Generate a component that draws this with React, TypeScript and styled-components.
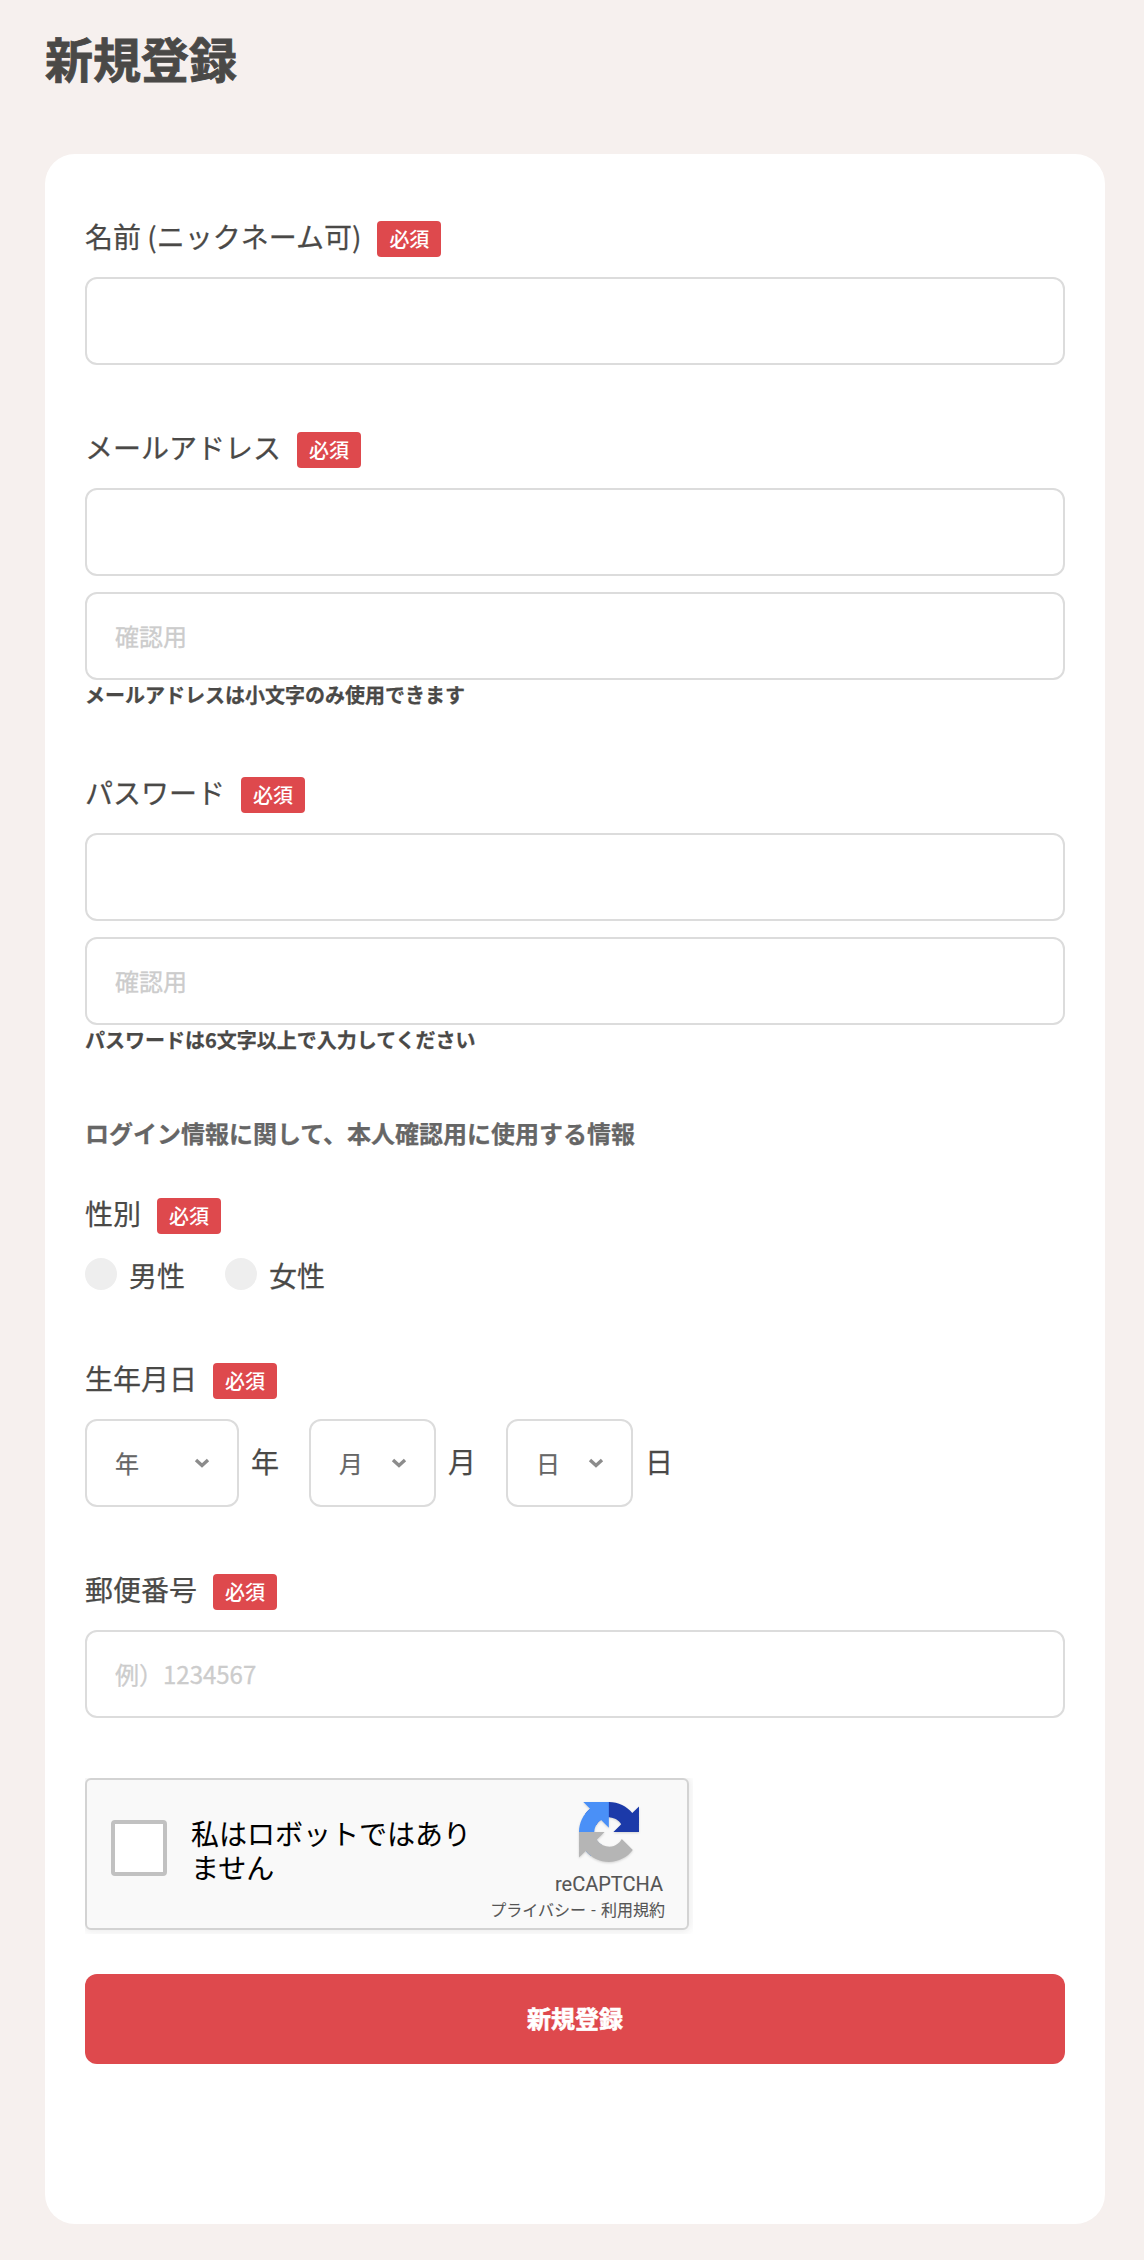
import React from "react";
import styled, { createGlobalStyle } from "styled-components";

const jp = `"Noto Sans CJK JP", sans-serif`;

const GlobalStyle = createGlobalStyle`
  *, *::before, *::after { box-sizing: border-box; }
  body {
    margin: 0;
    background: #f6f0ee;
    color: #4a4947;
    font-family: ${jp};
    -webkit-text-stroke: 0.25px currentColor;
  }
  input, select, button { font-family: inherit; margin: 0; }
`;

const Page = styled.main`
  min-height: 2260px;
  padding: 29px 39px 36px 45px;
`;

const Title = styled.h1`
  margin: 0;
  font-size: 48px;
  line-height: 56px;
  font-weight: 700;
  -webkit-text-stroke-width: 0.8px;
`;

const Card = styled.form`
  display: flex;
  flex-direction: column;
  margin-top: 69px;
  padding: 67px 40px 160px;
  background: #fff;
  border-radius: 30px;
`;

const Field = styled.section<{ $gap?: number }>`
  display: flex;
  flex-direction: column;
  margin-top: ${({ $gap = 67 }) => $gap}px;
`;

const LabelRow = styled.div`
  display: flex;
  gap: 16px;
  height: 36px;
  margin-bottom: 20px;
  font-size: 28px;
  line-height: 30px;
`;

const Badge = styled.span`
  width: 64px;
  height: 36px;
  border-radius: 4px;
  background: #de494d;
  color: #fff;
  font-size: 20px;
  line-height: 35px;
  font-weight: 500;
  text-align: center;
  -webkit-text-stroke-width: 0;
`;

const Inputs = styled.div`
  display: flex;
  flex-direction: column;
  gap: 16px;
`;

const Input = styled.input`
  width: 100%;
  height: 88px;
  padding: 0 28px 2px;
  border: 2px solid #dcdcdc;
  border-radius: 12px;
  background: #fff;
  color: #4a4947;
  font-size: 24px;
  outline: none;
  &::placeholder {
    color: #ccc;
    opacity: 1;
    -webkit-text-stroke: 0.3px #ccc;
  }
`;

const Note = styled.p`
  margin: 0;
  font-size: 20px;
  line-height: 30px;
  font-weight: 700;
`;

const Info = styled.p`
  margin: 60px 0 0;
  color: #666;
  font-size: 24px;
  line-height: 36px;
  font-weight: 700;
`;

const Radios = styled.div`
  display: flex;
  gap: 40px;
  height: 42px;
`;

const RadioLabel = styled.label`
  display: flex;
  align-items: flex-start;
  gap: 12px;
  font-size: 28px;
  line-height: 43px;
`;

const Radio = styled.input`
  appearance: none;
  width: 32px;
  height: 32px;
  margin: 4px 0 0;
  border-radius: 50%;
  background: #eee;
`;

const Dates = styled.div`
  display: flex;
  gap: 30px;
`;

const DatePart = styled.label`
  display: flex;
  align-items: flex-start;
  gap: 12px;
  font-size: 28px;
  line-height: 85px;
`;

const SelectBox = styled.span<{ $width: number }>`
  display: grid;
  grid-template-columns: 1fr 30px;
  align-items: center;
  width: ${({ $width }) => $width}px;
  height: 88px;
  padding-right: 13px;
  border: 2px solid #dcdcdc;
  border-radius: 12px;
`;

const Select = styled.select`
  appearance: none;
  width: 100%;
  height: 84px;
  padding: 0 0 2px 28px;
  border: 0;
  background: transparent;
  color: #666;
  font-size: 24px;
`;

const Captcha = styled.div`
  display: flex;
  width: 604px;
  height: 152px;
  margin-top: 60px;
  border: 2px solid #d3d3d3;
  border-radius: 6px;
  background: #f9f9f9;
  box-shadow: 0 0 8px 2px rgba(0, 0, 0, 0.08);
  clip-path: inset(0 -4px -4px 0);
  font-family: Roboto, ${jp};
  -webkit-text-stroke-width: 0.1px;
`;

const Check = styled.span`
  width: 56px;
  height: 56px;
  margin: 40px 0 0 24px;
  border: 4px solid #c1c1c1;
  border-radius: 4px;
  background: #fff;
`;

const CaptchaText = styled.span`
  width: 284px;
  margin: 39px 0 0 24px;
  color: #000;
  font-size: 28px;
  line-height: 34px;
`;

const Brand = styled.div`
  display: flex;
  flex: 1;
  flex-direction: column;
  align-items: flex-end;
  padding: 22px 24px 0 0;
  color: #555;
  white-space: nowrap;
`;

const BrandName = styled.span`
  margin-top: 10px;
  font-size: 20px;
  line-height: 24px;
`;

const Links = styled.span`
  margin: 3px -2px 0 0;
  font-size: 16px;
  line-height: 24px;
  word-spacing: 1.3px;
`;

const Logo = styled.svg`
  display: block;
  width: 60px;
  height: 60px;
  margin-right: 24px;
  filter: drop-shadow(0 1px 1px rgba(0, 0, 0, 0.15));
`;

const Submit = styled.button`
  height: 90px;
  margin-top: 44px;
  padding: 0 0 3px;
  border: 0;
  border-radius: 12px;
  background: #de494d;
  color: #fff;
  font-size: 24px;
  font-weight: 700;
  -webkit-text-stroke: 0.6px #fff;
`;

function Label({ text }: { text: string }) {
  return (
    <LabelRow>
      <span>{text}</span>
      <Badge>必須</Badge>
    </LabelRow>
  );
}

function DateSelect({ unit, width }: { unit: string; width: number }) {
  return (
    <DatePart>
      <SelectBox $width={width}>
        <Select defaultValue={unit}>
          <option>{unit}</option>
        </Select>
        <svg width="16" height="10" viewBox="0 0 16 10">
          <path d="M2 2l6 5.5L14 2" fill="none" stroke="#8c8c8c" strokeWidth="3.4" />
        </svg>
      </SelectBox>
      {unit}
    </DatePart>
  );
}

export default function App() {
  return (
    <Page>
      <GlobalStyle />
      <Title>新規登録</Title>
      <Card>
        <Field $gap={0}>
          <Label text="名前 (ニックネーム可)" />
          <Input />
        </Field>
        <Field>
          <Label text="メールアドレス" />
          <Inputs>
            <Input type="email" />
            <Input type="email" placeholder="確認用" />
          </Inputs>
          <Note>メールアドレスは小文字のみ使用できます</Note>
        </Field>
        <Field>
          <Label text="パスワード" />
          <Inputs>
            <Input type="password" />
            <Input type="password" placeholder="確認用" />
          </Inputs>
          <Note>パスワードは6文字以上で入力してください</Note>
        </Field>
        <Info>ログイン情報に関して、本人確認用に使用する情報</Info>
        <Field $gap={47}>
          <Label text="性別" />
          <Radios>
            <RadioLabel>
              <Radio type="radio" name="gender" />
              男性
            </RadioLabel>
            <RadioLabel>
              <Radio type="radio" name="gender" />
              女性
            </RadioLabel>
          </Radios>
        </Field>
        <Field>
          <Label text="生年月日" />
          <Dates>
            <DateSelect unit="年" width={154} />
            <DateSelect unit="月" width={127} />
            <DateSelect unit="日" width={127} />
          </Dates>
        </Field>
        <Field>
          <Label text="郵便番号" />
          <Input placeholder="例）1234567" />
        </Field>
        <Captcha>
          <Check />
          <CaptchaText>私はロボットではありません</CaptchaText>
          <Brand>
            <Logo viewBox="0 0 64 64">
              <path fill="#1c3aa9" d="M64 31.955l-.033-1.37V4.687l-7.16 7.16C50.948 4.674 42.033.093 32.05.093c-10.4 0-19.622 4.96-25.458 12.64l11.736 11.86a15.55 15.55 0 0 1 4.754-5.334c2.05-1.6 4.952-2.906 8.968-2.906.485 0 .86.057 1.135.163 4.976.393 9.288 3.14 11.828 7.124l-8.307 8.307L64 31.953" />
              <path fill="#4a90f7" d="M31.862.094l-1.37.033H4.594l7.16 7.16C4.58 13.147 0 22.06 0 32.046c0 10.4 4.96 19.622 12.64 25.458L24.5 45.768a15.55 15.55 0 0 1-5.334-4.754c-1.6-2.05-2.906-4.952-2.906-8.968 0-.485.057-.86.163-1.135.393-4.976 3.14-9.288 7.124-11.828l8.307 8.307L31.86.095" />
              <path fill="#b5b5b5" d="M.001 32.045l.033 1.37v25.898l7.16-7.16c5.86 7.173 14.774 11.754 24.76 11.754 10.4 0 19.622-4.96 25.458-12.64l-11.736-11.86a15.55 15.55 0 0 1-4.754 5.334c-2.05 1.6-4.952 2.906-8.968 2.906-.485 0-.86-.057-1.135-.163-4.976-.393-9.288-3.14-11.828-7.124l8.307-8.307c-10.522.04-22.4.066-27.295-.005" />
            </Logo>
            <BrandName>reCAPTCHA</BrandName>
            <Links>プライバシー - 利用規約</Links>
          </Brand>
        </Captcha>
        <Submit type="button">新規登録</Submit>
      </Card>
    </Page>
  );
}
